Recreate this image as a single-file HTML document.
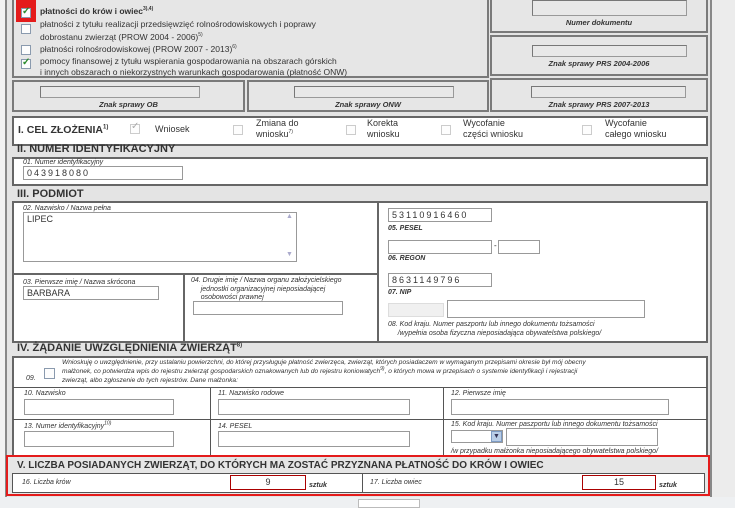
<!DOCTYPE html>
<html><head><meta charset="utf-8"><style>
*{box-sizing:border-box;margin:0;padding:0}
body{width:735px;height:508px;overflow:hidden;background:#e4e4e4;font-family:"Liberation Sans",Arial,sans-serif;position:relative;color:#222}
.a{position:absolute}
.box{position:absolute;border:2px solid #7a7a7a;background:#e6e6e6}
.wb{position:absolute;border:1px solid #555;background:#fff}
.in{position:absolute;border:1px solid #999;background:#fff;font-size:9px;letter-spacing:2px;padding:1px 3px;color:#333}
.gin{position:absolute;border:1px solid #999;border-top-color:#777;border-left-color:#777;background:#e8e8e8}
.lab{position:absolute;font-size:7.5px;font-style:italic;font-weight:bold;color:#333}
.li{position:absolute;font-size:7px;font-style:italic;color:#333;line-height:9px}
.cb{position:absolute;width:10px;height:10px;border:1px solid #8a9aae;background:#fdfdfd}
.ck::after{content:"✓";position:absolute;left:0px;top:-3px;font-size:10px;color:#2a8a2a;font-weight:bold}
.h{position:absolute;font-size:11px;font-weight:bold;color:#333;line-height:12px}
.t{position:absolute;font-size:8.5px;color:#333;line-height:11px}
.vl{position:absolute;width:1px;background:#555}
.hl{position:absolute;height:1px;background:#555}
sup{line-height:0}
</style></head><body>
<div class="a" style="left:0;top:0;width:5px;height:508px;background:#f2f2f2"></div>
<div class="a" style="left:5px;top:0;width:2px;height:497px;background:#888"></div>
<div class="a" style="left:710px;top:0;width:2px;height:497px;background:#888"></div>
<div class="a" style="left:712px;top:0;width:23px;height:508px;background:#ececec"></div>

<div class="box" style="left:12px;top:-2px;width:477px;height:80px"></div>
<div class="a" style="left:16px;top:0;width:20px;height:22px;background:#e41b1b"></div>
<div class="cb ck" style="left:21px;top:8px"></div>
<div class="t" style="left:40px;top:6px;font-weight:bold">płatności do krów i owiec<sup style="font-size:5px">3),4)</sup></div>
<div class="cb" style="left:21px;top:24px"></div>
<div class="t" style="left:40px;top:19px">płatności z tytułu realizacji przedsięwzięć rolnośrodowiskowych i poprawy</div>
<div class="t" style="left:40px;top:32px">dobrostanu zwierząt (PROW 2004 - 2006)<sup style="font-size:5px">5)</sup></div>
<div class="cb" style="left:21px;top:45px"></div>
<div class="t" style="left:40px;top:44px">płatności rolnośrodowiskowej (PROW 2007 - 2013)<sup style="font-size:5px">6)</sup></div>
<div class="cb ck" style="left:21px;top:59px"></div>
<div class="t" style="left:40px;top:56px">pomocy finansowej z tytułu wspierania gospodarowania na obszarach górskich</div>
<div class="t" style="left:40px;top:67px">i innych obszarach o niekorzystnych warunkach gospodarowania (płatność ONW)</div>

<div class="box" style="left:490px;top:-2px;width:218px;height:35px"></div>
<div class="gin" style="left:532px;top:0;width:155px;height:16px"></div>
<div class="lab" style="left:490px;top:18px;width:218px;text-align:center">Numer dokumentu</div>
<div class="box" style="left:490px;top:35px;width:218px;height:41px"></div>
<div class="gin" style="left:532px;top:45px;width:155px;height:12px"></div>
<div class="lab" style="left:490px;top:59px;width:218px;text-align:center">Znak sprawy PRS 2004-2006</div>

<div class="box" style="left:12px;top:80px;width:233px;height:32px"></div>
<div class="gin" style="left:40px;top:86px;width:160px;height:12px"></div>
<div class="lab" style="left:12px;top:100px;width:233px;text-align:center">Znak sprawy OB</div>
<div class="box" style="left:247px;top:80px;width:242px;height:32px"></div>
<div class="gin" style="left:294px;top:86px;width:160px;height:12px"></div>
<div class="lab" style="left:247px;top:100px;width:242px;text-align:center">Znak sprawy ONW</div>
<div class="box" style="left:490px;top:78px;width:218px;height:34px"></div>
<div class="gin" style="left:531px;top:86px;width:155px;height:12px"></div>
<div class="lab" style="left:490px;top:100px;width:218px;text-align:center">Znak sprawy PRS 2007-2013</div>

<div class="wb" style="left:12px;top:116px;width:696px;height:30px;border:2px solid #666"></div>
<div class="h" style="left:18px;top:124px;font-size:10.5px">I. CEL ZŁOŻENIA<sup style="font-size:6px">1)</sup></div>
<div class="cb" style="left:130px;top:124px;border-color:#ccc"></div><div class="a" style="left:131px;top:121px;font-size:10px;color:#aaa">✓</div>
<div class="t" style="left:155px;top:124px;font-size:9px">Wniosek</div>
<div class="cb" style="left:233px;top:125px;border-color:#ccc"></div>
<div class="t" style="left:256px;top:118px;font-size:9px;line-height:11px">Zmiana do<br>wniosku<sup style="font-size:5px">7)</sup></div>
<div class="cb" style="left:346px;top:125px;border-color:#ccc"></div>
<div class="t" style="left:367px;top:118px;font-size:9px;line-height:11px">Korekta<br>wniosku</div>
<div class="cb" style="left:441px;top:125px;border-color:#ccc"></div>
<div class="t" style="left:463px;top:118px;font-size:9px;line-height:11px">Wycofanie<br>części wniosku</div>
<div class="cb" style="left:582px;top:125px;border-color:#ccc"></div>
<div class="t" style="left:605px;top:118px;font-size:9px;line-height:11px">Wycofanie<br>całego wniosku</div>

<div class="h" style="left:17px;top:143px">II. NUMER IDENTYFIKACYJNY</div>
<div class="wb" style="left:12px;top:157px;width:696px;height:29px;border:2px solid #666"></div>
<div class="li" style="left:23px;top:158px">01. Numer identyfikacyjny</div>
<div class="in" style="left:23px;top:166px;width:160px;height:14px">043918080</div>

<div class="h" style="left:17px;top:188px">III. PODMIOT</div>
<div class="wb" style="left:12px;top:201px;width:696px;height:142px;border:2px solid #666"></div>
<div class="vl" style="left:377px;top:202px;height:140px;width:2px;background:#666"></div>
<div class="hl" style="left:13px;top:273px;width:364px;height:2px;background:#666"></div>
<div class="vl" style="left:183px;top:274px;height:68px;width:2px;background:#666"></div>
<div class="li" style="left:23px;top:204px">02. Nazwisko / Nazwa pełna</div>
<div class="in" style="left:23px;top:212px;width:274px;height:50px;letter-spacing:0">LIPEC</div>
<div class="a" style="left:286px;top:213px;font-size:7px;color:#aac">▲</div>
<div class="a" style="left:286px;top:251px;font-size:7px;color:#aac">▼</div>
<div class="in" style="left:388px;top:208px;width:104px;height:14px">53110916460</div>
<div class="li" style="left:388px;top:224px;font-weight:bold">05. PESEL</div>
<div class="in" style="left:388px;top:240px;width:104px;height:14px"></div>
<div class="a" style="left:494px;top:241px;font-size:8px">-</div>
<div class="in" style="left:498px;top:240px;width:42px;height:14px"></div>
<div class="li" style="left:388px;top:254px;font-weight:bold">06. REGON</div>
<div class="li" style="left:23px;top:278px">03. Pierwsze imię / Nazwa skrócona</div>
<div class="in" style="left:23px;top:286px;width:136px;height:14px;letter-spacing:0">BARBARA</div>
<div class="li" style="left:191px;top:277px;line-height:8.5px">04. Drugie imię / Nazwa organu założycielskiego<br>&nbsp;&nbsp;&nbsp;&nbsp;&nbsp;jednostki organizacyjnej nieposiadającej<br>&nbsp;&nbsp;&nbsp;&nbsp;&nbsp;osobowości prawnej</div>
<div class="in" style="left:193px;top:301px;width:150px;height:14px"></div>
<div class="in" style="left:388px;top:273px;width:104px;height:14px">8631149796</div>
<div class="li" style="left:388px;top:288px;font-weight:bold">07. NIP</div>
<div class="in" style="left:388px;top:303px;width:56px;height:14px;background:#f0f0f0;border-color:#ddd"></div>
<div class="in" style="left:447px;top:300px;width:198px;height:18px"></div>
<div class="li" style="left:388px;top:320px">08. Kod kraju. Numer paszportu lub innego dokumentu tożsamości<br>&nbsp;&nbsp;&nbsp;&nbsp;&nbsp;/wypełnia osoba fizyczna nieposiadająca obywatelstwa polskiego/</div>

<div class="h" style="left:17px;top:342px">IV. ŻĄDANIE UWZGLĘDNIENIA ZWIERZĄT<sup style="font-size:6px">8)</sup></div>
<div class="wb" style="left:12px;top:356px;width:696px;height:110px;border:2px solid #666"></div>
<div class="cb" style="left:44px;top:368px;width:11px;height:11px"></div>
<div class="li" style="left:26px;top:374px">09.</div>
<div class="li" style="left:62px;top:358px;line-height:9px;font-size:6.6px">Wnioskuję o uwzględnienie, przy ustalaniu powierzchni, do której przysługuje płatność zwierzęca, zwierząt, których posiadaczem w wymaganym przepisami okresie był mój obecny<br>małżonek, co potwierdza wpis do rejestru zwierząt gospodarskich oznakowanych lub do rejestru koniowatych<sup style="font-size:5px">9)</sup>, o których mowa w przepisach o systemie identyfikacji i rejestracji<br>zwierząt, albo zgłoszenie do tych rejestrów. Dane małżonka:</div>
<div class="hl" style="left:13px;top:387px;width:694px"></div>
<div class="hl" style="left:13px;top:419px;width:694px"></div>
<div class="vl" style="left:210px;top:387px;height:75px"></div>
<div class="vl" style="left:443px;top:387px;height:75px"></div>
<div class="li" style="left:24px;top:389px">10. Nazwisko</div>
<div class="in" style="left:24px;top:399px;width:150px;height:16px"></div>
<div class="li" style="left:218px;top:389px">11. Nazwisko rodowe</div>
<div class="in" style="left:218px;top:399px;width:192px;height:16px"></div>
<div class="li" style="left:451px;top:389px">12. Pierwsze imię</div>
<div class="in" style="left:451px;top:399px;width:218px;height:16px"></div>
<div class="li" style="left:24px;top:422px">13. Numer identyfikacyjny<sup style="font-size:5px">10)</sup></div>
<div class="in" style="left:24px;top:431px;width:150px;height:16px"></div>
<div class="li" style="left:218px;top:422px">14. PESEL</div>
<div class="in" style="left:218px;top:431px;width:192px;height:16px"></div>
<div class="li" style="left:451px;top:420px">15. Kod kraju. Numer paszportu lub innego dokumentu tożsamości</div>
<div class="in" style="left:451px;top:430px;width:52px;height:13px"></div>
<div class="a" style="left:491px;top:431px;width:11px;height:11px;background:#b9cde6;border:1px solid #7d9bc4;font-size:7px;text-align:center;line-height:10px;color:#335">▼</div>
<div class="in" style="left:506px;top:428px;width:152px;height:18px"></div>
<div class="li" style="left:451px;top:447px">/w przypadku małżonka nieposiadającego obywatelstwa polskiego/</div>

<div class="a" style="left:6px;top:455px;width:704px;height:41px;border:2px solid #e41b1b;background:#e6e6e6"></div>
<div class="h" style="left:17px;top:460px;font-size:10px">V. LICZBA POSIADANYCH ZWIERZĄT, DO KTÓRYCH MA ZOSTAĆ PRZYZNANA PŁATNOŚĆ DO KRÓW I OWIEC</div>
<div class="wb" style="left:12px;top:473px;width:693px;height:20px;border:1px solid #555"></div>
<div class="vl" style="left:362px;top:474px;height:18px"></div>
<div class="li" style="left:22px;top:478px">16. Liczba krów</div>
<div class="in" style="left:230px;top:475px;width:76px;height:15px;border:1px solid #a00;text-align:center;letter-spacing:0">9</div>
<div class="li" style="left:309px;top:481px;font-weight:bold">sztuk</div>
<div class="li" style="left:370px;top:478px">17. Liczba owiec</div>
<div class="in" style="left:582px;top:475px;width:74px;height:15px;border:1px solid #a00;text-align:center;letter-spacing:0">15</div>
<div class="li" style="left:659px;top:481px;font-weight:bold">sztuk</div>
<div class="a" style="left:0;top:497px;width:735px;height:11px;background:#eef0f2"></div>
<div class="a" style="left:358px;top:499px;width:62px;height:9px;background:#fff;border:1px solid #bbb"></div>
</body></html>
